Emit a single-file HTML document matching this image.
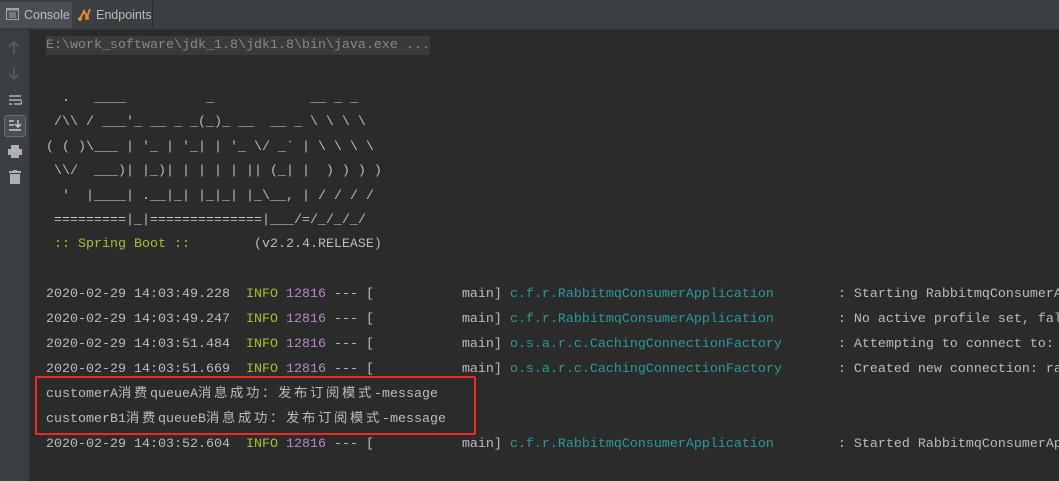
<!DOCTYPE html>
<html><head><meta charset="utf-8"><style>
body{margin:0;width:1059px;height:481px;background:#2b2b2b;overflow:hidden;position:relative;font-family:"Liberation Sans","Noto Sans CJK SC",sans-serif}
.tabs{position:absolute;left:0;top:0;width:1059px;height:29px;background:#3c3f41;border-bottom:1px solid #323232}
.tab{position:absolute;top:2px;height:26px;font-size:12.5px;color:#bbb;line-height:26px}
.gut{position:absolute;left:0;top:30px;width:29px;height:451px;background:#3c3f41;border-right:1px solid #323232}
pre{margin:0;position:absolute;left:46px;right:0;overflow:hidden;font-family:"Liberation Mono","Noto Sans CJK SC",monospace;font-size:13.33px;color:#bbbbbb;white-space:pre}
.i{color:#a8c023}.p{color:#b389c5}.l{color:#299999}.y{color:#a8c023}
.c{letter-spacing:2.67px}
</style></head><body>
<div class="tabs">
 <div class="tab" style="left:0;width:72px;background:#4b4f52;padding-left:24px;box-sizing:border-box">Console</div>
 <svg style="position:absolute;left:6px;top:8px" width="13" height="12"><rect x="0.5" y="0.5" width="12" height="11" fill="none" stroke="#9aa7b0"/><rect x="0.5" y="0.5" width="12" height="2" fill="#9aa7b0"/><path d="M3 5h7M3 7h7M3 9h7" stroke="#9aa7b0"/></svg>
 <div class="tab" style="left:96px">Endpoints</div>
 <svg style="position:absolute;left:78px;top:7px" width="15" height="15"><path d="M2 12 L6 4 L9 10 L12 2" stroke="#e08a2c" stroke-width="2" fill="none"/><circle cx="2" cy="12" r="2" fill="#e08a2c"/><circle cx="9" cy="11" r="2" fill="#e08a2c"/></svg>
 <div style="position:absolute;left:152px;top:2px;width:1px;height:26px;background:#2b2b2b"></div>
</div>
<div class="gut">
 <svg style="position:absolute;left:8px;top:11px" width="12" height="13"><path d="M6 13V2M1 6l5-5 5 5" stroke="#5a5d5f" stroke-width="1.6" fill="none"/></svg>
 <svg style="position:absolute;left:8px;top:37px" width="12" height="13"><path d="M6 0v11M1 7l5 5 5-5" stroke="#5a5d5f" stroke-width="1.6" fill="none"/></svg>
 <svg style="position:absolute;left:8px;top:64px" width="14" height="12"><path d="M1 2h12M1 6h11a2 2 0 0 1 0 4h-6M1 10h3" stroke="#aeb0b2" stroke-width="1.6" fill="none"/></svg>
 <div style="position:absolute;left:4px;top:85px;width:20px;height:20px;border:1px solid #6b6e70;border-radius:3px;background:#4a4e50"></div>
 <svg style="position:absolute;left:8px;top:89px" width="14" height="12"><path d="M1 2h5M1 6h5M1 11h12M10 1v7M7 5l3 3 3-3" stroke="#c8cacc" stroke-width="1.5" fill="none"/></svg>
 <svg style="position:absolute;left:8px;top:115px" width="14" height="13"><rect x="3" y="0" width="8" height="4" fill="#aeb0b2"/><rect x="0" y="4" width="14" height="6" fill="#aeb0b2"/><rect x="3" y="9" width="8" height="4" fill="#aeb0b2"/></svg>
 <svg style="position:absolute;left:9px;top:140px" width="12" height="14"><rect x="0" y="1" width="12" height="2" fill="#aeb0b2"/><rect x="4" y="0" width="4" height="2" fill="#aeb0b2"/><rect x="1" y="4" width="10" height="10" fill="#aeb0b2"/></svg>
</div>
<div style="position:absolute;left:46px;top:36px;width:384px;height:19px;background:#3a3a3a"></div>
<pre style="top:37px;line-height:17px;color:#888">E:\work_software\jdk_1.8\jdk1.8\bin\java.exe ...</pre>
<pre style="top:87px;line-height:24.4px">  .   ____          _            __ _ _
 /\\ / ___'_ __ _ _(_)_ __  __ _ \ \ \ \
( ( )\___ | '_ | '_| | '_ \/ _` | \ \ \ \
 \\/  ___)| |_)| | | | | || (_| |  ) ) ) )
  '  |____| .__|_| |_|_| |_\__, | / / / /
 =========|_|==============|___/=/_/_/_/
<span class="y"> :: Spring Boot ::</span>        (v2.2.4.RELEASE)</pre>
<pre style="top:282px;line-height:25px">2020-02-29 14:03:49.228  <span class="i">INFO</span> <span class="p">12816</span> --- [           main] <span class="l">c.f.r.RabbitmqConsumerApplication       </span> : Starting RabbitmqConsumerApplication
2020-02-29 14:03:49.247  <span class="i">INFO</span> <span class="p">12816</span> --- [           main] <span class="l">c.f.r.RabbitmqConsumerApplication       </span> : No active profile set, falling back
2020-02-29 14:03:51.484  <span class="i">INFO</span> <span class="p">12816</span> --- [           main] <span class="l">o.s.a.r.c.CachingConnectionFactory      </span> : Attempting to connect to: [localhost]
2020-02-29 14:03:51.669  <span class="i">INFO</span> <span class="p">12816</span> --- [           main] <span class="l">o.s.a.r.c.CachingConnectionFactory      </span> : Created new connection: rabbitConn
customerA<span class="c">消费</span>queueA<span class="c">消息成功：发布订阅模式</span>-message
customerB1<span class="c">消费</span>queueB<span class="c">消息成功：发布订阅模式</span>-message
2020-02-29 14:03:52.604  <span class="i">INFO</span> <span class="p">12816</span> --- [           main] <span class="l">c.f.r.RabbitmqConsumerApplication       </span> : Started RabbitmqConsumerApplication</pre>
<div style="position:absolute;left:35px;top:376px;width:437px;height:55px;border:2px solid #f02a20;border-radius:2px"></div>
</body></html>
